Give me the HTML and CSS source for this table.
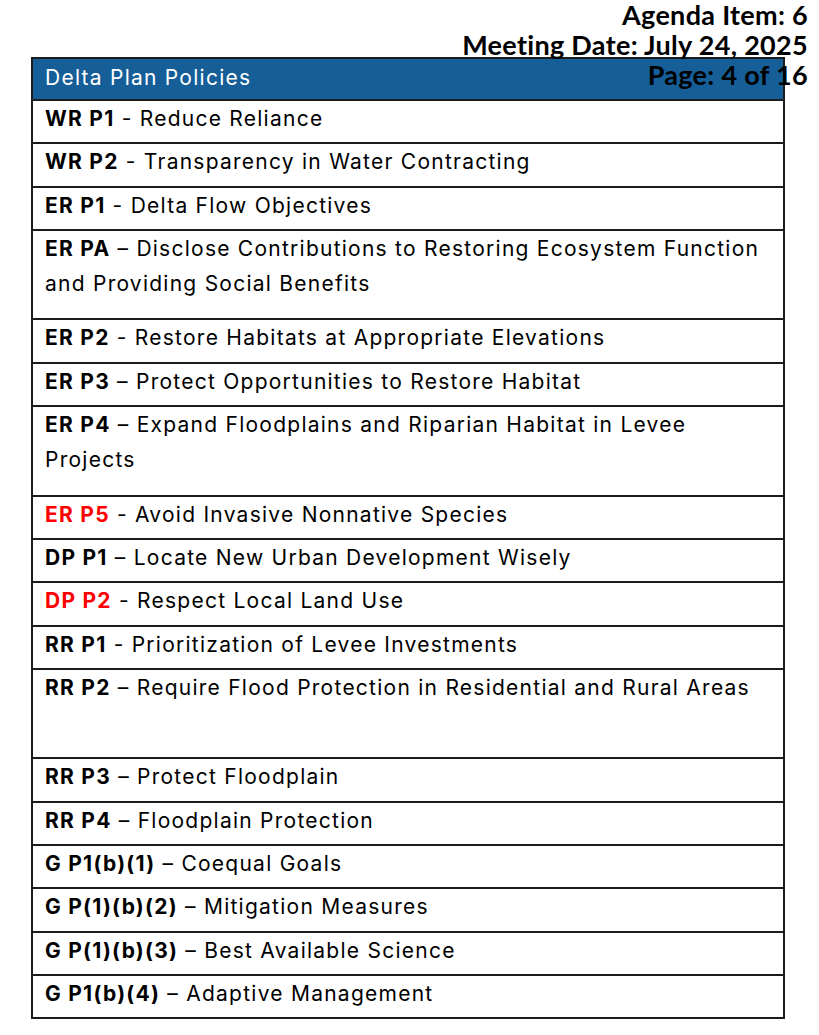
FILE: index.html
```html
<!DOCTYPE html>
<html lang="en">
<head>
<meta charset="utf-8">
<title>Delta Plan Policies</title>
<link rel="stylesheet" href="styles.css">
</head>
<body>
<div class="page">
  <div class="meta">
    <div>Agenda Item: 6</div>
    <div>Meeting Date: July 24, 2025</div>
    <div>Page: 4 of 16</div>
  </div>
  <div class="policy-table">
    <div class="head">Delta Plan Policies</div>
    <div class="row"><b>WR P1</b> - Reduce Reliance</div>
    <div class="row"><b>WR P2</b> - Transparency in Water Contracting</div>
    <div class="row"><b>ER P1</b> - Delta Flow Objectives</div>
    <div class="row tall"><b>ER PA</b> – Disclose Contributions to Restoring Ecosystem Function<br>and Providing Social Benefits</div>
    <div class="row"><b>ER P2</b> - Restore Habitats at Appropriate Elevations</div>
    <div class="row"><b>ER P3</b> – Protect Opportunities to Restore Habitat</div>
    <div class="row tall"><b>ER P4</b> – Expand Floodplains and Riparian Habitat in Levee<br>Projects</div>
    <div class="row"><b class="red">ER P5</b> - Avoid Invasive Nonnative Species</div>
    <div class="row"><b>DP P1</b> – Locate New Urban Development Wisely</div>
    <div class="row"><b class="red">DP P2</b> - Respect Local Land Use</div>
    <div class="row"><b>RR P1</b> - Prioritization of Levee Investments</div>
    <div class="row tall"><b>RR P2</b> – Require Flood Protection in Residential and Rural Areas</div>
    <div class="row"><b>RR P3</b> – Protect Floodplain</div>
    <div class="row"><b>RR P4</b> – Floodplain Protection</div>
    <div class="row"><b>G P1(b)(1)</b> – Coequal Goals</div>
    <div class="row"><b>G P(1)(b)(2)</b> – Mitigation Measures</div>
    <div class="row"><b>G P(1)(b)(3)</b> – Best Available Science</div>
    <div class="row"><b>G P1(b)(4)</b> – Adaptive Management</div>
  </div>
</div>
</body>
</html>
```

FILE: styles.css
```css
html, body {
  margin: 0;
  padding: 0;
  background: #ffffff;
}

.page {
  position: relative;
  width: 819px;
  height: 1035px;
  padding-top: 57px;
  box-sizing: border-box;
}

.meta {
  position: absolute;
  top: 0;
  right: 11px;
  z-index: 2;
  text-align: right;
  font-family: "Lato", "Open Sans", sans-serif;
  font-weight: 700;
  font-size: 27px;
  letter-spacing: 0.3px;
  line-height: 30px;
  color: #000000;
}

.policy-table {
  margin-left: 31px;
  width: 754px;
  border: 2px solid #1c1c1c;
  box-sizing: border-box;
  font-family: "Inter", "Roboto", sans-serif;
  font-size: 21px;
  letter-spacing: 1.25px;
  color: #000000;
}

.head {
  height: 42px;
  box-sizing: border-box;
  background: #155e97;
  color: #ffffff;
  padding: 1px 12px 0;
  line-height: 35px;
  border-bottom: 2px solid #1c1c1c;
}

.row {
  height: 43.35px;
  box-sizing: border-box;
  padding: 0 12px 0 12px;
  line-height: 35px;
  border-bottom: 2px solid #1c1c1c;
  white-space: nowrap;
}

.row:last-child {
  border-bottom: none;
  height: 41.35px;
}

.row.tall {
  height: 89.4px;
}

.row b {
  font-weight: 700;
}

.row b.red {
  color: #ff0000;
}
```
